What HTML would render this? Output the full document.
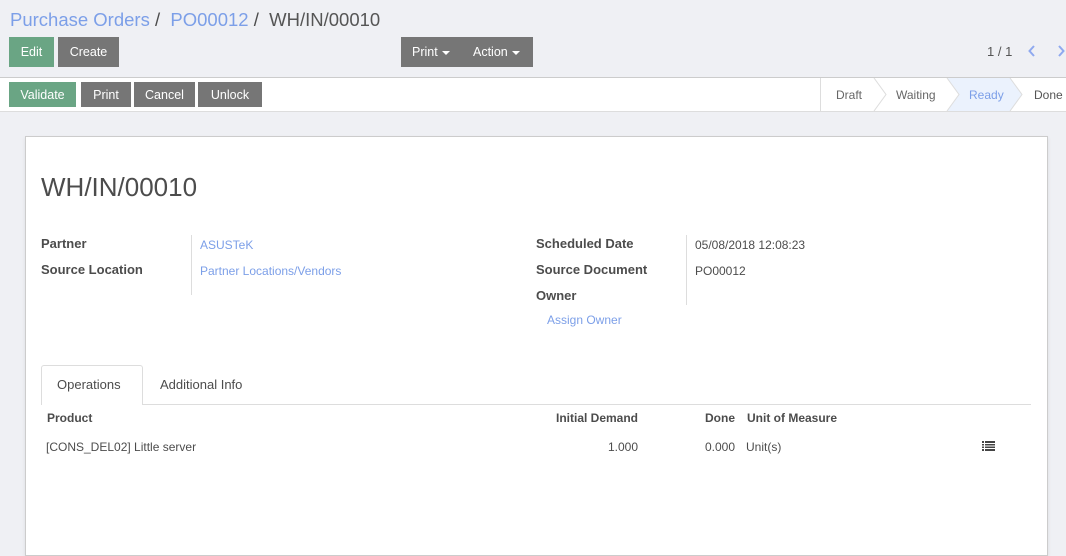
<!DOCTYPE html>
<html><head><meta charset="utf-8"><style>
*{box-sizing:border-box;margin:0;padding:0}
body{width:1066px;height:542px;overflow:hidden;background:#eff0f4;font-family:"Liberation Sans",sans-serif;color:#4c4c4c;position:relative;font-size:13px}
.a{position:absolute;white-space:nowrap}
.btn{position:absolute;height:30px;line-height:30px;color:#fff;font-size:12.5px;text-align:center;background:#767676}
.g{background:#6aa584}
.lnk{color:#7c9fe8}
.lbl{font-weight:bold;font-size:13px;color:#4c4c4c}
.v{font-size:12px}
.car{display:inline-block;border-left:4px solid transparent;border-right:4px solid transparent;border-top:4px solid #fff;vertical-align:middle;margin-left:4px}
</style></head><body>
<div class="a" style="left:10px;top:9px;font-size:18.5px;"><span class="lnk">Purchase Orders</span> /&nbsp; <span class="lnk">PO00012</span> /&nbsp; <span style="color:#555">WH/IN/00010</span></div>
<div class="btn g" style="left:9px;top:37px;width:45px">Edit</div>
<div class="btn" style="left:58px;top:37px;width:61px">Create</div>
<div class="btn" style="left:401px;top:37px;width:132px"></div>
<div class="a" style="left:412px;top:45px;color:#fff;font-size:12.5px">Print<span class="car"></span></div>
<div class="a" style="left:473px;top:45px;color:#fff;font-size:12.5px">Action<span class="car"></span></div>
<div class="a" style="left:987px;top:44px;font-size:13px;color:#555">1 / 1</div>
<svg class="a" style="left:1028px;top:45px" width="38" height="12"><polyline points="6,1 1.5,6 6,11" fill="none" stroke="#8fa9ef" stroke-width="2"/><polyline points="31,1 35.5,6 31,11" fill="none" stroke="#8fa9ef" stroke-width="2"/></svg>
<div class="a" style="left:0;top:77px;width:1066px;height:35px;background:#fff;border-top:1px solid #ccc;border-bottom:1px solid #ddd"></div>
<div class="btn g" style="left:9px;top:82px;width:67px;height:25px;line-height:26px">Validate</div>
<div class="btn" style="left:81px;top:82px;width:50px;height:25px;line-height:26px">Print</div>
<div class="btn" style="left:134px;top:82px;width:61px;height:25px;line-height:26px">Cancel</div>
<div class="btn" style="left:198px;top:82px;width:64px;height:25px;line-height:26px">Unlock</div>
<div class="a" style="left:820px;top:78px;width:1px;height:33px;background:#ddd"></div>
<svg class="a" style="left:820px;top:78px" width="246" height="33"><polygon points="127,0 190,0 202,16.5 190,33 127,33 139,16.5" fill="#ebf2fd"/><polyline points="54,0 66,16.5 54,33" fill="none" stroke="#ddd"/><polyline points="127,0 139,16.5 127,33" fill="none" stroke="#ddd"/><polyline points="190,0 202,16.5 190,33" fill="none" stroke="#ddd"/></svg>
<div class="a" style="left:836px;top:88px;font-size:12px;color:#666">Draft</div>
<div class="a" style="left:896px;top:88px;font-size:12px;color:#666">Waiting</div>
<div class="a" style="left:969px;top:88px;font-size:12px;color:#7c9fe8">Ready</div>
<div class="a" style="left:1034px;top:88px;font-size:12px;color:#555">Done</div>
<div class="a" style="left:25px;top:136px;width:1023px;height:420px;background:#fff;border:1px solid #ccc;box-shadow:0 2px 4px rgba(0,0,0,.08)"></div>
<div class="a" style="left:41px;top:172px;font-size:26px;color:#4c4c4c">WH/IN/00010</div>
<div class="a lbl" style="left:41px;top:236px">Partner</div>
<div class="a lbl" style="left:41px;top:262px">Source Location</div>
<div class="a" style="left:191px;top:235px;width:1px;height:60px;background:#ddd"></div>
<div class="a v lnk" style="left:200px;top:238px">ASUSTeK</div>
<div class="a v lnk" style="left:200px;top:264px">Partner Locations/Vendors</div>
<div class="a lbl" style="left:536px;top:236px">Scheduled Date</div>
<div class="a lbl" style="left:536px;top:262px">Source Document</div>
<div class="a lbl" style="left:536px;top:288px">Owner</div>
<div class="a" style="left:686px;top:235px;width:1px;height:70px;background:#ddd"></div>
<div class="a v" style="left:695px;top:238px">05/08/2018 12:08:23</div>
<div class="a v" style="left:695px;top:264px">PO00012</div>
<div class="a v lnk" style="left:547px;top:313px">Assign Owner</div>
<div class="a" style="left:41px;top:404px;width:990px;height:1px;background:#ddd"></div>
<div class="a" style="left:41px;top:365px;width:102px;height:40px;background:#fff;border:1px solid #ddd;border-bottom:none;border-radius:3px 3px 0 0"></div>
<div class="a" style="left:57px;top:377px;font-size:13px">Operations</div>
<div class="a" style="left:160px;top:377px;font-size:13px">Additional Info</div>
<div class="a lbl" style="left:47px;top:411px;font-size:12px">Product</div>
<div class="a lbl" style="right:428px;top:411px;font-size:12px">Initial Demand</div>
<div class="a lbl" style="right:331px;top:411px;font-size:12px">Done</div>
<div class="a lbl" style="left:747px;top:411px;font-size:12px">Unit of Measure</div>
<div class="a v" style="left:46px;top:440px">[CONS_DEL02] Little server</div>
<div class="a v" style="right:428px;top:440px">1.000</div>
<div class="a v" style="right:331px;top:440px">0.000</div>
<div class="a v" style="left:746px;top:440px">Unit(s)</div>
<svg class="a" style="left:982px;top:441px" width="13" height="10"><g fill="#444"><rect x="0" y="0" width="2" height="2"/><rect x="3" y="0" width="10" height="2"/><rect x="0" y="3" width="2" height="1.5"/><rect x="3" y="3" width="10" height="1.5"/><rect x="0" y="5.5" width="2" height="1.5"/><rect x="3" y="5.5" width="10" height="1.5"/><rect x="0" y="8" width="2" height="2"/><rect x="3" y="8" width="10" height="2"/></g></svg>
</body></html>
